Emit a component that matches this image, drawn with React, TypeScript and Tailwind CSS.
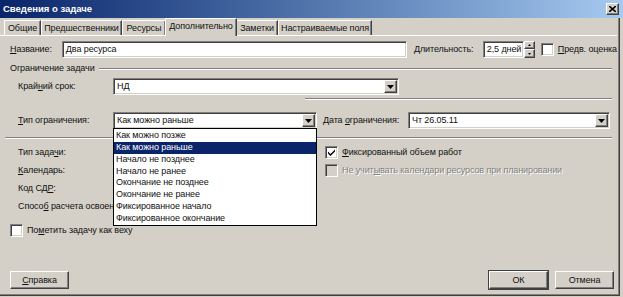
import React from "react";

// Classic Windows 3D edges
const sunken =
  "border border-t-[#808080] border-l-[#808080] border-b-white border-r-white shadow-[inset_1px_1px_0_#404040,inset_-1px_-1px_0_#d4d0c8]";
const raised =
  "border border-t-white border-l-white border-b-[#404040] border-r-[#404040] shadow-[inset_-1px_-1px_0_#808080]";

function U({ children }: { children: React.ReactNode }) {
  return <span className="underline underline-offset-[1px]">{children}</span>;
}

function ArrowButton() {
  return (
    <div className={`w-[13px] h-[13px] mr-[1px] bg-[#d4d0c8] flex items-center justify-center ${raised}`}>
      <svg width="7" height="4" viewBox="0 0 7 4">
        <path d="M0 0h7L3.5 4z" fill="#000" />
      </svg>
    </div>
  );
}

function Select({ value, className }: { value: string; className: string }) {
  return (
    <div className={`h-[17px] bg-white flex items-center ${sunken} ${className}`}>
      <span className="flex-1 pl-[3px] whitespace-nowrap overflow-hidden">{value}</span>
      <ArrowButton />
    </div>
  );
}

function Checkbox({ checked = false, disabled = false }: { checked?: boolean; disabled?: boolean }) {
  return (
    <div
      className={`w-[13px] h-[13px] shrink-0 flex items-center justify-center ${sunken} ${
        disabled ? "bg-[#d4d0c8]" : "bg-white"
      }`}
    >
      {checked && (
        <svg width="7" height="7" viewBox="0 0 7 7">
          <path d="M0 2.5l2.5 2.5L7 0.5v2L2.5 7 0 4.5z" fill="#000" />
        </svg>
      )}
    </div>
  );
}

function Button({ children, primary = false }: { children: React.ReactNode; primary?: boolean }) {
  return (
    <div
      className={`w-[59px] h-[18px] flex items-center justify-center bg-[#d4d0c8] ${
        primary ? "outline outline-1 outline-[#404040]" : ""
      } ${raised}`}
    >
      {children}
    </div>
  );
}

const tabs = [
  { label: "Общие", cls: "w-[37px]" },
  { label: "Предшественники", cls: "w-[81px]" },
  { label: "Ресурсы", cls: "w-[44px]" },
  { label: "Дополнительно", cls: "w-[72px]", active: true },
  { label: "Заметки", cls: "w-[42px]" },
  { label: "Настраиваемые поля", cls: "w-[94px]" },
];

const options = [
  "Как можно позже",
  "Как можно раньше",
  "Начало не позднее",
  "Начало не ранее",
  "Окончание не позднее",
  "Окончание не ранее",
  "Фиксированное начало",
  "Фиксированное окончание",
];

export default function App() {
  return (
    <div className="w-[623px] h-[297px] bg-[#d4d0c8] relative overflow-hidden text-[9px] tracking-[-0.1px] leading-none text-[#111] font-['Liberation_Sans',Arial,sans-serif]">
      {/* Title bar */}
      <div className="h-[18px] flex items-center bg-gradient-to-r from-[#0a246a] to-[#a6caf0] pl-[3px] pr-[4px]">
        <span className="flex-1 text-white font-bold text-[9.5px] tracking-normal">Сведения о задаче</span>
        <div className={`w-[13px] h-[12px] bg-[#d4d0c8] flex items-center justify-center ${raised}`}>
          <svg width="7" height="6" viewBox="0 0 7 6">
            <path d="M0 0L7 6M7 0L0 6" stroke="#000" strokeWidth="1.6" />
          </svg>
        </div>
      </div>

      <div className="w-[620px] h-[278px] flex flex-col border-r border-b border-[#404040] shadow-[inset_-1px_-1px_0_#808080]">
        {/* Tabs */}
        <div className="h-[17px] flex items-end pl-[4px]">
          {tabs.map((t) => (
            <div
              key={t.label}
              className={`${t.cls} flex items-center justify-center whitespace-nowrap border-t border-l border-white border-r border-r-[#404040] shadow-[inset_-1px_0_0_#808080] ${
                t.active ? "h-[18px] -mx-[1px] relative z-10 bg-[#d4d0c8] -mb-[1px] pb-[2px]" : "h-[15px]"
              }`}
            >
              {t.label}
            </div>
          ))}
        </div>

        {/* Panel */}
        <div className="w-[617px] flex-1 flex flex-col border-t border-white">
          {/* Name / duration */}
          <div className="mt-[5px] pl-[10px] flex items-center h-[17px]">
            <span className="w-[52px]">
              <U>Н</U>азвание:
            </span>
            <div className={`w-[346px] h-[17px] bg-white flex items-center pl-[3px] ${sunken}`}>Два ресурса</div>
            <span className="ml-[7px] w-[69px]">
              <U>Д</U>лительность:
            </span>
            <div className="w-[52px] h-[17px] flex">
              <div className={`w-[41px] h-[17px] bg-white flex items-center pl-[3px] whitespace-nowrap overflow-hidden ${sunken}`}>
                2,5 дней
              </div>
              <div className="w-[11px] h-[17px] flex flex-col">
                <div className={`h-[8px] bg-[#d4d0c8] flex items-center justify-center ${raised}`}>
                  <svg width="3" height="2" viewBox="0 0 3 2">
                    <path d="M0 2h3L1.5 0z" fill="#000" />
                  </svg>
                </div>
                <div className={`h-[9px] bg-[#d4d0c8] flex items-center justify-center ${raised}`}>
                  <svg width="3" height="2" viewBox="0 0 3 2">
                    <path d="M0 0h3L1.5 2z" fill="#000" />
                  </svg>
                </div>
              </div>
            </div>
            <div className="ml-[6px]">
              <Checkbox />
            </div>
            <span className="ml-[4px] whitespace-nowrap">
              <U>П</U>редв. оценка
            </span>
          </div>

          {/* Group header */}
          <div className="mt-[4px] h-[13px] pl-[10px] pr-[5px] flex items-center">
            <span>Ограничение задачи</span>
            <div className="flex-1 ml-[4px] h-[2px] border-t border-[#808080] border-b border-b-white" />
          </div>

          {/* Deadline */}
          <div className="mt-[3px] pl-[18px] flex items-center h-[17px]">
            <span className="w-[95px]">
              Край<U>н</U>ий срок:
            </span>
            <Select value="НД" className="w-[286px]" />
          </div>

          <div className="mt-[3px] ml-[305px] mr-[5px] h-[2px] border-t border-[#808080] border-b border-b-white" />

          {/* Constraint */}
          <div className="mt-[12px] pl-[18px] flex items-center h-[17px]">
            <span className="w-[95px]">
              <U>Т</U>ип ограничения:
            </span>
            <Select value="Как можно раньше" className="w-[204px]" />
            <span className="ml-[6px] w-[85px] whitespace-nowrap">
              Дата <U>о</U>граничения:
            </span>
            <Select value="Чт 26.05.11" className="w-[202px]" />
          </div>

          <div className="mt-[8px] ml-[5px] mr-[5px] h-[2px] border-t border-[#808080] border-b border-b-white" />

          {/* Task options */}
          <div className="mt-[4px] pl-[18px] flex flex-col">
            <div className="h-[18px] flex items-center">
              <span className="w-[307px]">
                Тип зада<U>ч</U>и:
              </span>
              <Checkbox checked />
              <span className="ml-[4px]">
                <U>Ф</U>иксированный объем работ
              </span>
            </div>
            <div className="h-[18px] flex items-center">
              <span className="w-[307px]">
                <U>К</U>алендарь:
              </span>
              <Checkbox disabled />
              <span className="ml-[4px] text-[#808080] [text-shadow:1px_1px_0_#fff]">
                Не учит<U>ы</U>вать календари ресурсов при планировании
              </span>
            </div>
            <div className="h-[18px] flex items-center">
              <span>
                Код СД<U>Р</U>:
              </span>
            </div>
            <div className="h-[18px] flex items-center">
              {/* label runs under the open list; clip it at the list edge */}
              <span className="w-[95px] overflow-hidden whitespace-nowrap">
                Спосо<U>б</U> расчета освоенного объема:
              </span>
            </div>
          </div>

          <div className="mt-[8px] pl-[10px] h-[14px] flex items-center">
            <Checkbox />
            <span className="ml-[4px]">
              По<U>м</U>етить задачу как веху
            </span>
          </div>

          {/* Buttons */}
          <div className="mt-[34px] pl-[10px] pr-[3px] flex items-center">
            <Button>
              <span>
                <U>С</U>правка
              </span>
            </Button>
            <div className="flex-1" />
            <Button primary>ОК</Button>
            <div className="w-[7px]" />
            <Button>Отмена</Button>
          </div>
        </div>
      </div>

      {/* Open dropdown list */}
      <div className="absolute left-[113px] top-[128px] w-[204px] border border-black bg-white flex flex-col py-[1px]">
        {options.map((o, i) => (
          <div
            key={o}
            className={`h-[11.75px] flex items-center pl-[2px] whitespace-nowrap ${
              i === 1 ? "bg-[#0a246a] text-white" : ""
            }`}
          >
            {o}
          </div>
        ))}
      </div>
    </div>
  );
}
